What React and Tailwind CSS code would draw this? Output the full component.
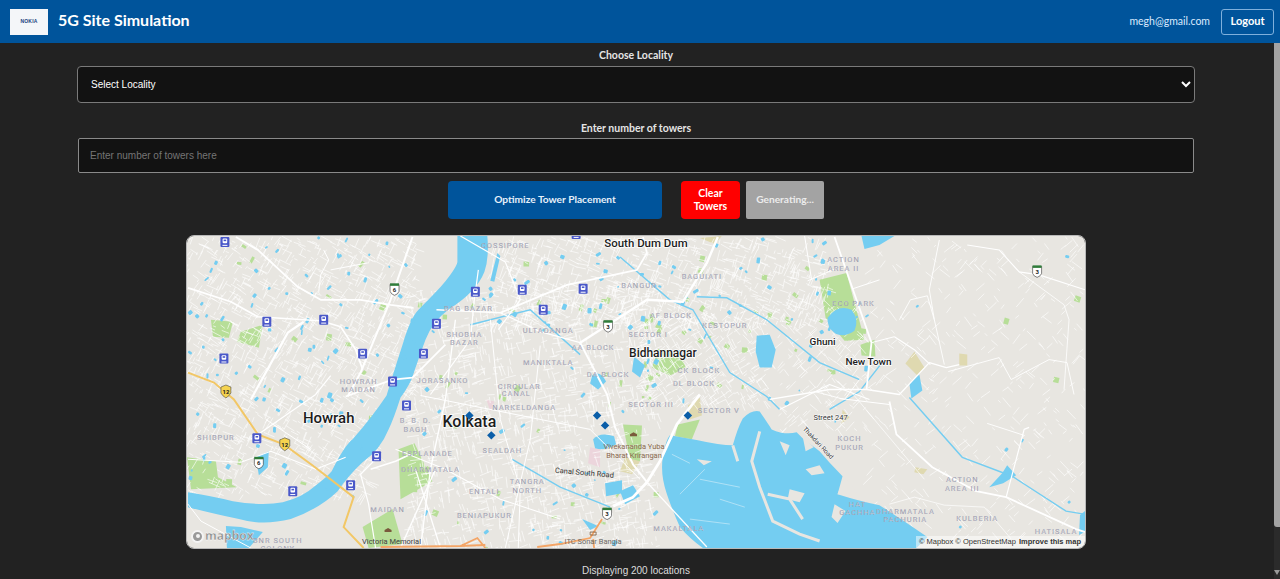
// 5G site simulation page with a static drawing of the Kolkata basemap
import { useMemo } from 'react';

const LAND = '#e8e6e1';
const WATER = '#74cdf1';
const PARK = '#b7de98';

// Seeded so the minor streets come out the same on every render
function makeRandom(seed) {
  let s = seed;
  return () => {
    s = (s + 0x6d2b79f5) | 0;
    let t = Math.imul(s ^ (s >>> 15), 1 | s);
    t = (t + Math.imul(t ^ (t >>> 7), 61 | t)) ^ t;
    return ((t ^ (t >>> 14)) >>> 0) / 4294967296;
  };
}

const ZONES = [
  { x: 186, y: 236, w: 230, h: 160, streets: 1000, ponds: 60, parks: 14, angle: 0.5 },
  { x: 186, y: 396, w: 190, h: 100, streets: 460, ponds: 30, parks: 6, angle: 0.5 },
  { x: 410, y: 290, w: 250, h: 259, streets: 1500, ponds: 36, parks: 36, angle: 1.35 },
  { x: 490, y: 236, w: 340, h: 90, streets: 900, ponds: 48, parks: 14, angle: 0.35 },
  { x: 640, y: 310, w: 130, h: 95, streets: 420, ponds: 12, parks: 16, angle: 1.0 },
  { x: 780, y: 300, w: 90, h: 130, streets: 200, ponds: 12, parks: 8, angle: 0.8 },
  { x: 870, y: 236, w: 216, h: 300, streets: 420, ponds: 6, parks: 3, angle: 0.8 },
];

function buildScatter() {
  const rand = makeRandom(57);
  const streets = [];
  const ponds = [];
  const parks = [];
  for (const z of ZONES) {
    for (let i = 0; i < z.streets; i++) {
      const x = z.x + rand() * z.w;
      const y = z.y + rand() * z.h;
      const a = z.angle + (rand() > 0.5 ? Math.PI / 2 : 0) + (rand() - 0.5) * 0.35;
      const len = 3 + rand() * 10;
      streets.push(`M${x.toFixed(1)} ${y.toFixed(1)}l${(Math.cos(a) * len).toFixed(1)} ${(Math.sin(a) * len).toFixed(1)}`);
    }
    for (let i = 0; i < z.ponds; i++) {
      ponds.push({ x: z.x + rand() * z.w, y: z.y + rand() * z.h, w: 1.5 + rand() * 3, h: 1.5 + rand() * 4.5, r: rand() * 60 });
    }
    for (let i = 0; i < z.parks; i++) {
      parks.push({ x: z.x + rand() * z.w, y: z.y + rand() * z.h, w: 2 + rand() * 4, h: 2 + rand() * 5, r: rand() * 40 });
    }
  }
  return { streets: streets.join(''), ponds, parks };
}

const WATER_SHAPES = [
  // Hooghly river
  'M457 236 L487 236 Q489 258 484 272 Q476 292 449 309 Q432 322 425 340 Q417 362 411 380 Q405 392 400 398 Q393 420 388 430 Q380 450 362 463 Q348 476 337 492 Q318 510 290 520 Q262 527 238 520 Q210 514 187 508 L187 493 Q212 497 232 502 Q262 507 282 503 Q302 498 314 487 Q326 478 331 472 Q344 446 352 440 Q372 417 386 396 Q392 376 402 345 Q410 318 418 310 Q436 292 442 285 Q456 268 457 262 Z',
  // East Kolkata wetlands
  'M663 457 Q666 440 670 436 L698 441 Q720 446 733 446 Q738 428 743 419 Q752 410 760 412 Q768 424 772 430 Q785 436 797 433 L805 441 Q815 448 820 452 Q830 464 843 477 Q840 488 838 495 Q860 502 880 506 Q905 522 928 538 L917 549 L703 549 Q690 540 680 528 Q672 510 667 495 Q660 475 663 457 Z',
  // Smaller lakes
  'M225 527 L240 528 L262 533 L248 549 L226 549 Z',
  'M757 336 L770 335 L776 350 L772 368 L760 368 L756 352 Z',
  'M828 318 Q838 304 852 310 Q860 320 855 331 Q845 338 836 334 Q827 328 828 318 Z',
  'M255 458 L268 452 L267 468 L258 476 Z',
  'M593 440 Q600 432 614 437 L616 445 Q606 452 595 449 Z',
  'M592 376 Q600 370 606 382 L598 390 L590 384 Z',
  'M497 253 L500 256 L494 282 L490 281 Z',
  'M605 484 L622 481 L622 494 L606 497 Z',
  'M620 492 L633 486 L640 497 L625 505 Z',
  'M634 357 Q640 362 645 366 L640 378 L632 372 Z',
  'M582 520 L598 527 L590 531 Z',
  'M1003 474 L1008 466 L1017 476 L1004 484 L990 488 Z',
  'M910 384 L920 375 L923 391 L912 399 Z',
  'M862 236 L895 236 L880 245 L865 249 Z',
  'M1081 516 L1086 512 L1086 533 L1080 536 Z',
];

const PARK_SHAPES = [
  'M820 280 L847 273 L865 340 L845 341 L826 318 Z',
  'M658 349 L680 354 L686 368 L670 376 L652 368 Z',
  'M186 458 L215 462 L217 478 L236 488 L190 490 Z',
  'M398 450 L414 444 L432 482 L400 500 Z',
  'M240 332 L262 325 L258 348 L236 342 Z',
  'M623 425 L642 426 L640 462 L630 462 Z',
  'M678 425 L700 420 L692 440 L675 437 Z',
  'M362 528 L392 510 L402 545 L368 549 Z',
  'M861 345 L875 340 L876 357 L862 356 Z',
  'M210 320 L232 322 L228 338 L212 337 Z',
];

const ROADS = [
  ['M235 237 L257 250 L297 287 L320 300 L360 300 L390 305 L413 308', 1.8],
  ['M187 288 L230 302 L257 317 L303 320 L320 321 L340 327 L355 350 L362 370', 1.7],
  ['M250 400 L287 333 L303 322', 2.2],
  ['M412 237 L390 300 L360 373 L347 397', 2],
  ['M323 250 L328 260 L320 275 L318 292', 1],
  ['M330 270 L367 263', 1],
  ['M345 397 L392 380 L412 378 L430 360 L445 345', 1.8],
  ['M500 313 L567 285 L637 270 L647 253 L643 237', 1.8],
  ['M580 343 L647 300 L683 302 L707 263 L718 237', 2.4],
  ['M460 236 L505 262 L520 300 L498 330', 1.2],
  ['M436 310 L500 313 L540 332 L580 343', 1.3],
  ['M580 343 L607 395 L615 428 L633 465 L647 483', 2],
  ['M700 395 L677 425 L660 462 L647 483 L633 498 L613 507', 2.8],
  ['M647 483 L707 548', 1.3],
  ['M430 395 L470 340 L474 300 L478 270', 1.2],
  ['M455 320 L445 400 L430 470 L420 549', 1.4],
  ['M490 320 L500 420 L520 490 L518 549', 1],
  ['M540 346 L530 440 L505 549', 1],
  ['M420 396 L590 430 L640 480', 1],
  ['M395 450 L445 470 L500 500 L560 520', 1.1],
  ['M370 470 L395 462 L410 455', 1.6],
  ['M375 460 L360 475 L368 505 L375 549', 1.2],
  ['M435 470 L400 549', 1.4],
  ['M415 470 L440 549', 1.3],
  ['M187 505 L200 522 L250 549', 1],
  ['M250 440 L315 395 L330 376', 1.2],
  ['M187 460 L240 463 L270 452 L315 470 L345 458', 1.1],
  ['M265 420 L310 450', 1],
  ['M835 237 L872 343 L867 390', 1.8],
  ['M808 281 L838 268 M853 289 L880 280 M872 343 L895 337', 1],
  ['M805 236 L812 280', 1],
  ['M890 402 L897 435 L933 468 L977 492 L1007 498 L1077 530 L1086 533', 1.8],
  ['M770 400 L830 390 L867 390 L900 395 L930 363 L947 368 L960 365', 1.3],
  ['M895 337 L915 350 L931 365', 1.2],
  ['M900 320 L911 300 L928 296 L935 320 L945 365', 0.9],
  ['M935 320 L930 290 L940 240', 0.9],
  ['M949 372 L1000 358 L1012 380 L1050 360 L1068 363 L1075 395', 0.9],
  ['M968 245 L1000 250 L1020 272 L1040 275 L1086 290', 1.1],
  ['M1020 272 L1065 305 L1070 320 L1065 390', 0.8],
  ['M1007 498 L1025 430 L1030 428', 1.2],
  ['M988 424 L1025 436', 0.9],
  ['M890 505 L915 498 L945 506 L985 508 L1012 540', 0.7],
  ['M840 399 L890 405', 1.1],
  ['M780 410 L800 400 L830 385 L870 400', 1.1],
  ['M815 392 L845 400 L860 380', 0.9],
  ['M853 394 L925 480', 0.7],
];

const CANALS = [
  'M620 257 L670 300 L693 310 L730 373 L767 397 L780 410',
  'M697 297 L727 298 L767 320 L820 363 L860 380',
  'M470 325 L530 310 L580 355',
  'M910 398 L963 458 L1013 477 L1067 512 L1085 515',
  'M512 460 L560 488 L610 508',
  'M830 410 L860 392 L885 360',
];

const CITY_LABELS = [
  ['South Dum Dum', 646, 247, 11.5],
  ['Howrah', 328, 424, 15],
  ['Kolkata', 469, 428, 16],
  ['Bidhannagar', 663, 357, 12],
  ['Ghuni', 823, 345, 10],
  ['New Town', 869, 365, 10],
];

const AREA_LABELS = [
  ['COSSIPORE', 505, 248], ['BAG BAZAR', 468, 311], ['SHOBHA', 464, 337], ['BAZAR', 464, 345],
  ['HOWRAH', 358, 384], ['MAIDAN', 358, 393], ['JORASANKO', 442, 383], ['CIRCULAR', 519, 389],
  ['CANAL', 516, 397], ['BAGUIATI', 702, 279], ['BANGUR', 639, 288], ['AF BLOCK', 671, 318],
  ['KESTOPUR', 725, 328], ['ULTADANGA', 548, 333], ['SECTOR I', 648, 337], ['AA BLOCK', 593, 350],
  ['MANIKTALA', 548, 365], ['DA BLOCK', 608, 377], ['CK BLOCK', 699, 373], ['DL BLOCK', 694, 386],
  ['ACTION', 844, 262], ['AREA II', 844, 271], ['ECO PARK', 854, 306], ['B. B. D.', 415, 424],
  ['BAGH', 415, 433], ['SHIBPUR', 215, 441], ['ESPLANADE', 427, 457], ['DHARMATALA', 430, 473],
  ['ENTALI', 484, 495], ['SEALDAH', 502, 454], ['MAIDAN', 387, 513], ['BENIAPUKUR', 484, 519],
  ['BNR SOUTH', 277, 544], ['COLONY', 277, 552], ['NARKELDANGA', 524, 411], ['SECTOR III', 651, 408],
  ['SECTOR V', 719, 414], ['TANGRA', 527, 485], ['NORTH', 527, 494], ['MAKALTALA', 679, 532],
  ['KOCH', 850, 442], ['PUKUR', 850, 451], ['ACTION', 963, 483], ['AREA III', 963, 492],
  ['HAT', 858, 508], ['GACHHA', 858, 516], ['DHARMATALA', 906, 515], ['PACHURIA', 906, 523],
  ['KULBERIA', 978, 522], ['HATISALA', 1057, 535],
];

const METRO_STOPS = [
  [224, 242], [266, 322], [323, 320], [362, 354], [223, 359], [475, 292], [436, 324], [423, 354],
  [392, 382], [256, 439], [292, 492], [406, 406], [376, 457], [350, 486], [522, 290], [583, 289],
  [543, 310], [576, 234],
];

const GREEN_SHIELDS = [[394, 289, '6'], [258, 463, '6'], [608, 326, '3'], [607, 514, '3'], [1038, 271, '3']];
const YELLOW_SHIELDS = [[225, 392], [284, 445]];
const TOWERS = [[469, 416], [491, 436], [597, 416], [605, 426], [688, 416]];

function MetroStop({ x, y }) {
  return (
    <g transform={`translate(${x - 4.5} ${y - 5})`}>
      <rect width="9" height="10" rx="1" fill="#4a58c9" />
      <rect x="2.2" y="1.6" width="4.6" height="4.6" rx="1" fill="#fff" />
      <rect x="3.2" y="2.6" width="2.6" height="1.6" fill="#4a58c9" />
      <path d="M2 8.4h5" stroke="#fff" strokeWidth="1" />
    </g>
  );
}

function GreenShield({ x, y, label }) {
  return (
    <g transform={`translate(${x} ${y})`}>
      <path d="M-4.5 -4.5h9v7q-1 3-4.5 4q-3.500-1-4.500-4z" fill="#fff" stroke="#333" strokeWidth="0.6" />
      <path d="M-4.5 -5.500h9v2.500h-9z" fill="#2f7d3a" />
      <text x="0" y="3" textAnchor="middle" fontSize="6" fontWeight="700" fill="#222" fontFamily="Roboto, sans-serif">{label}</text>
    </g>
  );
}

function YellowShield({ x, y }) {
  return (
    <g transform={`translate(${x} ${y})`}>
      <path d="M0 -6.500l5 2v6q-1.500 3-5 5q-3.500-2-5-5v-6z" fill="#f5d34f" stroke="#444" strokeWidth="0.6" />
      <text x="0" y="2.500" textAnchor="middle" fontSize="6" fontWeight="700" fill="#222" fontFamily="Roboto, sans-serif">12</text>
    </g>
  );
}

function KolkataMap() {
  const { streets, ponds, parks } = useMemo(buildScatter, []);

  return (
    <svg viewBox="186 236 900 313" preserveAspectRatio="none" className="block h-full w-full" fontFamily="Roboto, sans-serif">
      <rect x="186" y="236" width="900" height="313" fill={LAND} />
      {PARK_SHAPES.map((d, i) => <path key={i} d={d} fill={PARK} />)}
      {parks.map((p, i) => (
        <rect key={i} x={p.x} y={p.y} width={p.w} height={p.h} fill={PARK} transform={`rotate(${p.r} ${p.x} ${p.y})`} />
      ))}
      <path d="M700 238 L722 236 L715 244 Z M625 458 L640 462 L632 475 L620 472 Z M688 406 L700 398 L702 416 L690 420 Z M843 410 L850 418 L842 424 Z" fill="#dfd9b0" />
      <path d="M590 448 L600 450 L600 468 L588 464 Z M486 400 L494 402 L490 412 Z" fill="#ecd5dc" />
      <path d="M915 352 L925 368 L918 376 L906 364 Z M960 354 L968 355 L968 366 L960 366 Z M916 468 L928 470 L924 475 L915 473 Z" fill="#dfd9b0" />
      <path d={streets} stroke="#fff" strokeWidth="0.7" fill="none" opacity="0.9" />
      {WATER_SHAPES.map((d, i) => <path key={i} d={d} fill={WATER} />)}
      {ponds.map((p, i) => (
        <rect key={i} x={p.x} y={p.y} width={p.w} height={p.h} rx="1" fill={WATER} transform={`rotate(${p.r} ${p.x} ${p.y})`} />
      ))}
      {/* wetland bunds and islands */}
      <path d="M733 446 L738 462 M760 432 L752 462 L760 488 L773 522 L800 535 L820 542 M768 495 L790 500 L803 520" stroke={LAND} strokeWidth="3" fill="none" />
      <path d="M697 460 L712 462 L704 466 Z M790 490 L805 494 L800 503 L788 500 Z M806 470 L820 466 L825 474 L812 476 Z M803 437 L814 448 L806 452 Z M845 478 L858 494 L838 495 Z M835 505 L846 512 L838 524 L832 518 Z M780 442 L790 446 L786 456 Z" fill={LAND} />
      <path d="M672 455 L690 464 M700 480 L740 488 M680 495 L705 470 M720 500 L745 508 M690 520 L730 525" stroke="#d6eef9" strokeWidth="0.6" fill="none" />
      {CANALS.map((d, i) => <path key={i} d={d} stroke={WATER} strokeWidth="1.4" fill="none" />)}
      {ROADS.map(([d, w], i) => (
        <path key={i} d={d} stroke="#fff" strokeWidth={w} fill="none" strokeLinejoin="round" />
      ))}
      <path d="M187 373 L213 383 L233 400 L257 435 L283 445 L313 467 L353 498 L343 528 L363 549" stroke="#f2c766" strokeWidth="2" fill="none" />
      <path d="M380 548 L460 547 L477 539 L485 549 M460 547 L485 546 M537 548 L560 545 L590 539 L602 520 M593 540 L594 549" stroke="#f4a566" strokeWidth="1.8" fill="none" />

      {AREA_LABELS.map(([text, x, y], i) => (
        <text key={i} x={x} y={y} textAnchor="middle" fontSize="7.5" letterSpacing="1" fill="#7e8098" stroke="#ffffff99" strokeWidth="0.2">{text}</text>
      ))}
      {CITY_LABELS.map(([text, x, y, size]) => (
        <text key={text} x={x} y={y} textAnchor="middle" fontSize={size} fontWeight="500" fill="#1c1c1c" stroke="#fff" strokeWidth="1.500" paintOrder="stroke">{text}</text>
      ))}
      <text x="391" y="545" textAnchor="middle" fontSize="7.500" fill="#3f3f3f">Victoria Memorial</text>
      <text x="593" y="545" textAnchor="middle" fontSize="7.500" fill="#6e6a66">ITC Sonar Bangla</text>
      <text x="634" y="450" textAnchor="middle" fontSize="7.500" fill="#8a6a50">Vivekananda Yuba</text>
      <text x="634" y="459" textAnchor="middle" fontSize="7.500" fill="#8a6a50">Bharat Krirangan</text>
      <text x="584" y="476" textAnchor="middle" fontSize="7.500" fill="#333" transform="rotate(5 584 476)">Canal South Road</text>
      <text x="831" y="421" textAnchor="middle" fontSize="7.500" fill="#333" stroke="#fff" strokeWidth="1" paintOrder="stroke">Street 247</text>
      <text x="817" y="445" textAnchor="middle" fontSize="6.500" fill="#333" stroke="#fff" strokeWidth="1" paintOrder="stroke" transform="rotate(47 817 445)">Thakdari Road</text>

      <path d="M384 533h7v-2l-3.500-2l-3.500 2z M630 437h7v-2l-3.500-2l-3.500 2z" fill="#7a5a3c" />
      <path d="M590 533h6v3h-6z" fill="none" stroke="#7a5a3c" strokeWidth="0.8" />

      {METRO_STOPS.map(([x, y], i) => <MetroStop key={i} x={x} y={y} />)}
      {GREEN_SHIELDS.map(([x, y, label], i) => <GreenShield key={i} x={x} y={y} label={label} />)}
      {YELLOW_SHIELDS.map(([x, y], i) => <YellowShield key={i} x={x} y={y} />)}
      {TOWERS.map(([x, y], i) => (
        <rect key={i} x={x - 3} y={y - 3} width="6" height="6" fill="#0b5ea8" transform={`rotate(45 ${x} ${y})`} />
      ))}
    </svg>
  );
}

export default function App() {
  return (
    <div className="flex h-[579px] flex-col overflow-hidden bg-[#222222] font-['Lato',sans-serif]">
      <header className="flex h-[43px] shrink-0 items-center justify-between bg-[#00549b] pl-[10px] pr-[6px]">
        <div className="flex items-center gap-[10px]">
          <div className="flex h-[26px] w-[38px] items-center justify-center bg-[#f4f6f9]">
            <span className="font-['Liberation_Sans',sans-serif] text-[5px] font-bold tracking-[0.2px] text-[#1b3f7e]">NOKIA</span>
          </div>
          <h1 className="pb-[3px] text-[16px] font-bold text-white">5G Site Simulation</h1>
        </div>
        <div className="flex items-center gap-[11px]">
          <span className="text-[10.500px] text-[#dbeafe]">megh@gmail.com</span>
          <button className="h-[26px] w-[53px] rounded-[3px] border border-[#7fb0dc] text-[11px] font-bold text-white">Logout</button>
        </div>
      </header>

      <div className="flex min-h-0 flex-1">
        <main className="flex min-w-0 flex-1 flex-col items-center pt-[6px] pr-[2px]">
          <label className="h-[17px] text-[10.500px] leading-[12px] font-bold text-[#e5e5e5]">Choose Locality</label>
          <select className="h-[37px] w-[1118px] rounded-[4px] border border-[#7a7a7a] bg-[#121212] pl-[9px] font-['Liberation_Sans',sans-serif] text-[10px] text-white">
            <option>Select Locality</option>
          </select>

          <label className="mt-[19px] h-[16px] text-[10.500px] leading-[12px] font-bold text-[#e5e5e5]">Enter number of towers</label>
          <input
            className="h-[35px] w-[1116px] rounded-[2px] border border-[#8a8a8a] bg-[#121212] px-[11px] font-['Liberation_Sans',sans-serif] text-[10px] text-white placeholder:text-[#757575]"
            placeholder="Enter number of towers here"
          />

          <div className="mt-[8px] flex h-[38px] items-stretch">
            <button className="w-[214px] rounded-[4px] bg-[#00549b] text-[10.200px] font-bold text-[#e6f0fa]">Optimize Tower Placement</button>
            <button className="ml-[19px] w-[59px] rounded-[4px] bg-[#ff0000] text-[10.500px] leading-[13px] font-bold text-white">Clear<br />Towers</button>
            <button className="ml-[6px] w-[78px] rounded-[2px] bg-[#a3a3a3] text-[10.200px] font-bold text-[#ececec]">Generating...</button>
          </div>

          <div className="relative mt-[16px] h-[314px] w-[900px] overflow-hidden rounded-[8px] border border-[#b9b9b9]">
            <KolkataMap />
            <div className="absolute bottom-[5px] left-[4px] flex items-center gap-[1px]">
              <span className="flex h-[13px] w-[13px] items-center justify-center rounded-full border-2 border-[#f4f4f4] bg-[#9a9a9a]">
                <span className="h-[4px] w-[4px] rounded-full bg-[#f4f4f4]" />
              </span>
              <span className="font-['Open_Sans',sans-serif] text-[12px] leading-[14px] font-bold text-[#8c8c8c] [-webkit-text-stroke:0.3px_#ffffff]">mapbox</span>
            </div>
            <div className="absolute right-0 bottom-0 flex h-[12px] items-center gap-[3px] bg-[#ffffff80] pr-[4px] pl-[3px] font-['Liberation_Sans',sans-serif] text-[7.500px] text-[#333333]">
              <span>© Mapbox © OpenStreetMap</span>
              <span className="font-bold">Improve this map</span>
            </div>
          </div>

          <p className="mt-[15px] font-['Liberation_Sans',sans-serif] text-[10px] leading-[13px] text-[#dddddd]">Displaying 200 locations</p>
        </main>

        <div className="flex w-[6px] shrink-0 flex-col bg-[#2b2b2b]">
          <div className="h-[484px] rounded-bl-[3px] bg-[#a3a3a3]" />
          <div className="mt-auto mb-[4px] h-0 w-0 border-x-[3px] border-t-[5px] border-x-transparent border-t-[#9a9a9a]" />
        </div>
      </div>
    </div>
  );
}
